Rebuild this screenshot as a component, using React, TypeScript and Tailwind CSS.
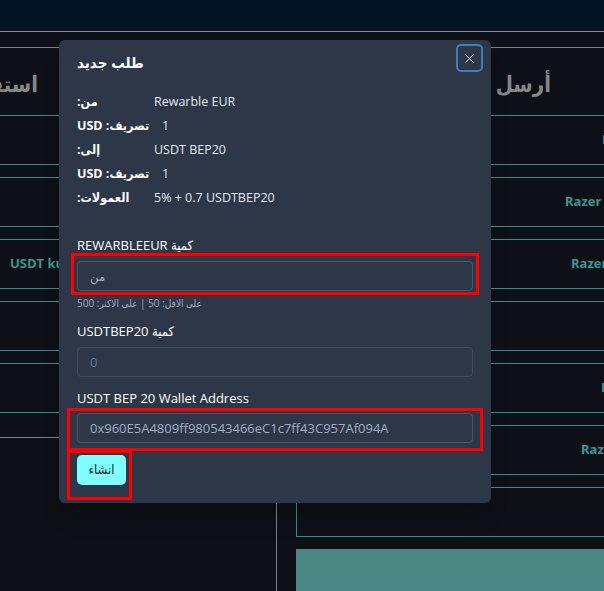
import { X } from "lucide-react";

const font = "font-['Open_Sans','DejaVu_Sans_Condensed','DejaVu_Sans',sans-serif]";

// rows behind the dialog: teal bordered boxes, text offset from the row's left border
const receiveRows = [
  { text: "", left: 0 },
  { text: "", left: 0 },
  { text: "USDT kucoin", left: 69 },
  { text: "", left: 0 },
  { text: "", left: 0 },
];

const sendRows = [
  { text: "Kucoin", left: 305 },
  { text: "Razer Gold USD", left: 268 },
  { text: "Razer Gold EUR", left: 274 },
  { text: "", left: 0 },
  { text: "Payeer", left: 304 },
  { text: "Razer Gold", left: 284 },
  { text: "", left: 0 },
];

const details = [
  { label: "من:", value: "Rewarble EUR", indent: false },
  { label: "تصريف: USD", value: "1", indent: true },
  { label: "إلى:", value: "USDT BEP20", indent: false },
  { label: "تصريف: USD", value: "1", indent: true },
  { label: "العمولات:", value: "5% + 0.7 USDTBEP20", indent: false },
];

function Row({ text, left }: { text: string; left: number }) {
  return (
    <div className="h-[50px] mb-[12px] border border-[#3c8985] flex items-center whitespace-nowrap overflow-hidden">
      {text && (
        <span className="text-[13px] font-bold text-[#3f9591]" style={{ marginLeft: left }}>
          {text}
        </span>
      )}
    </div>
  );
}

export default function App() {
  return (
    <div className={`relative w-[604px] h-[591px] overflow-hidden bg-[#0d1016] ${font}`}>
      {/* Top bar */}
      <div className="h-[32px] bg-[#021423] border-b border-[#8a8e93]" />

      {/* Exchange columns */}
      <div className="mt-[15px] border-t border-[#7c8086]">
        <div className="flex gap-[19px] ml-[-60px]">
          {/* Receive */}
          <div className="w-[337px] shrink-0 flex flex-col">
            <div className="h-[67px] pt-[21px] pr-[239px] text-right">
              <span className="text-[22px] leading-[28px] font-bold text-[#878787]" dir="rtl">
                استقبل
              </span>
            </div>
            {receiveRows.map((r, i) => (
              <Row key={i} text={r.text} left={r.left} />
            ))}
            <div className="mt-[12px] h-[200px] border-t border-r border-[#7c8086]" />
          </div>

          {/* Send */}
          <div className="w-[464px] shrink-0 flex flex-col">
            <div className="h-[67px] pt-[21px] pr-[209px] text-right">
              <span className="text-[22px] leading-[28px] font-bold text-[#878787]" dir="rtl">
                أرسل
              </span>
            </div>
            {sendRows.map((r, i) => (
              <Row key={i} text={r.text} left={r.left} />
            ))}
            <div className="h-[100px] bg-[#4a8785]" />
          </div>
        </div>
      </div>

      {/* New order dialog */}
      <div className="absolute left-[59px] top-[40px] w-[432px] bg-[#2d3748] rounded-[6px] shadow-xl pl-[18px] pr-[8px] pt-[4px] pb-[18px]">
        <div className="flex justify-between items-start">
          <h2 className="mt-[8px] text-[15px] leading-[20px] font-bold text-white" dir="rtl">
            طلب جديد
          </h2>
          <button className="w-[27px] h-[28px] rounded-[5px] border-2 border-[#3b7ec2] flex items-center justify-center text-white">
            <X size={15} strokeWidth={1.4} />
          </button>
        </div>

        <div className="mt-[18px] pr-[10px]">
          {details.map((d, i) => (
            <div key={i} className="flex items-center h-[24px] text-[12.5px]">
              <div className="w-[77px] shrink-0 text-left">
                <span dir="rtl" className="inline-block font-bold text-white">
                  {d.label}
                </span>
              </div>
              <span className={`text-[#e2e8f0] ${d.indent ? "pl-[8px]" : ""}`}>{d.value}</span>
            </div>
          ))}
        </div>

        <div className="pr-[10px]">
          <label className="block mt-[27px] text-[13px] leading-[16px] font-medium text-white">
            REWARBLEEUR كمية
          </label>
          <div className="relative mt-[8px]">
            <input
              dir="rtl"
              placeholder="من"
              className="block w-full h-[30px] rounded-[4px] border border-[#4a5568] bg-[#2d3748] px-[12px] text-left text-[13px] text-white placeholder:text-[#a0aec0] outline-none"
            />
            <span className="absolute -left-[6px] -right-[6px] -top-[8px] -bottom-[4px] border-[3px] border-[#ff0000] pointer-events-none" />
          </div>
          <div className="mt-[5px] text-[10px] leading-[14px] text-[#a0aec0]">
            <span dir="rtl" className="inline-block">على الاقل: 50 | على الاكثر: 500</span>
          </div>

          <label className="block mt-[13px] text-[13px] leading-[16px] font-medium text-white">
            USDTBEP20 كمية
          </label>
          <input
            placeholder="0"
            disabled
            className="block mt-[8px] w-full h-[30px] rounded-[4px] border border-[#3f4a5c] bg-[#2d3748] px-[12px] text-[13px] placeholder:text-[#6b7586] outline-none"
          />

          <label className="block mt-[13px] text-[13px] leading-[16px] font-medium text-white">
            USDT BEP 20 Wallet Address
          </label>
          <div className="relative mt-[7px]">
            <input
              defaultValue="0x960E5A4809ff980543466eC1c7ff43C957Af094A"
              className="block w-full h-[30px] rounded-[4px] border border-[#4a5568] bg-[#2d3748] px-[12px] text-[13px] text-[#a0aec0] outline-none"
            />
            <span className="absolute -left-[10px] -right-[10px] -top-[5px] -bottom-[8px] border-[3px] border-[#ff0000] pointer-events-none" />
          </div>

          <div className="relative mt-[12px] w-[49px]">
            <button className="w-[49px] h-[30px] rounded-[5px] bg-[#80fdff] text-[13px] font-normal text-[#1a202c]">
              انشاء
            </button>
            <span className="absolute -left-[10px] -right-[6px] -top-[5px] -bottom-[15px] border-[3px] border-[#ff0000] pointer-events-none" />
          </div>
        </div>
      </div>
    </div>
  );
}
